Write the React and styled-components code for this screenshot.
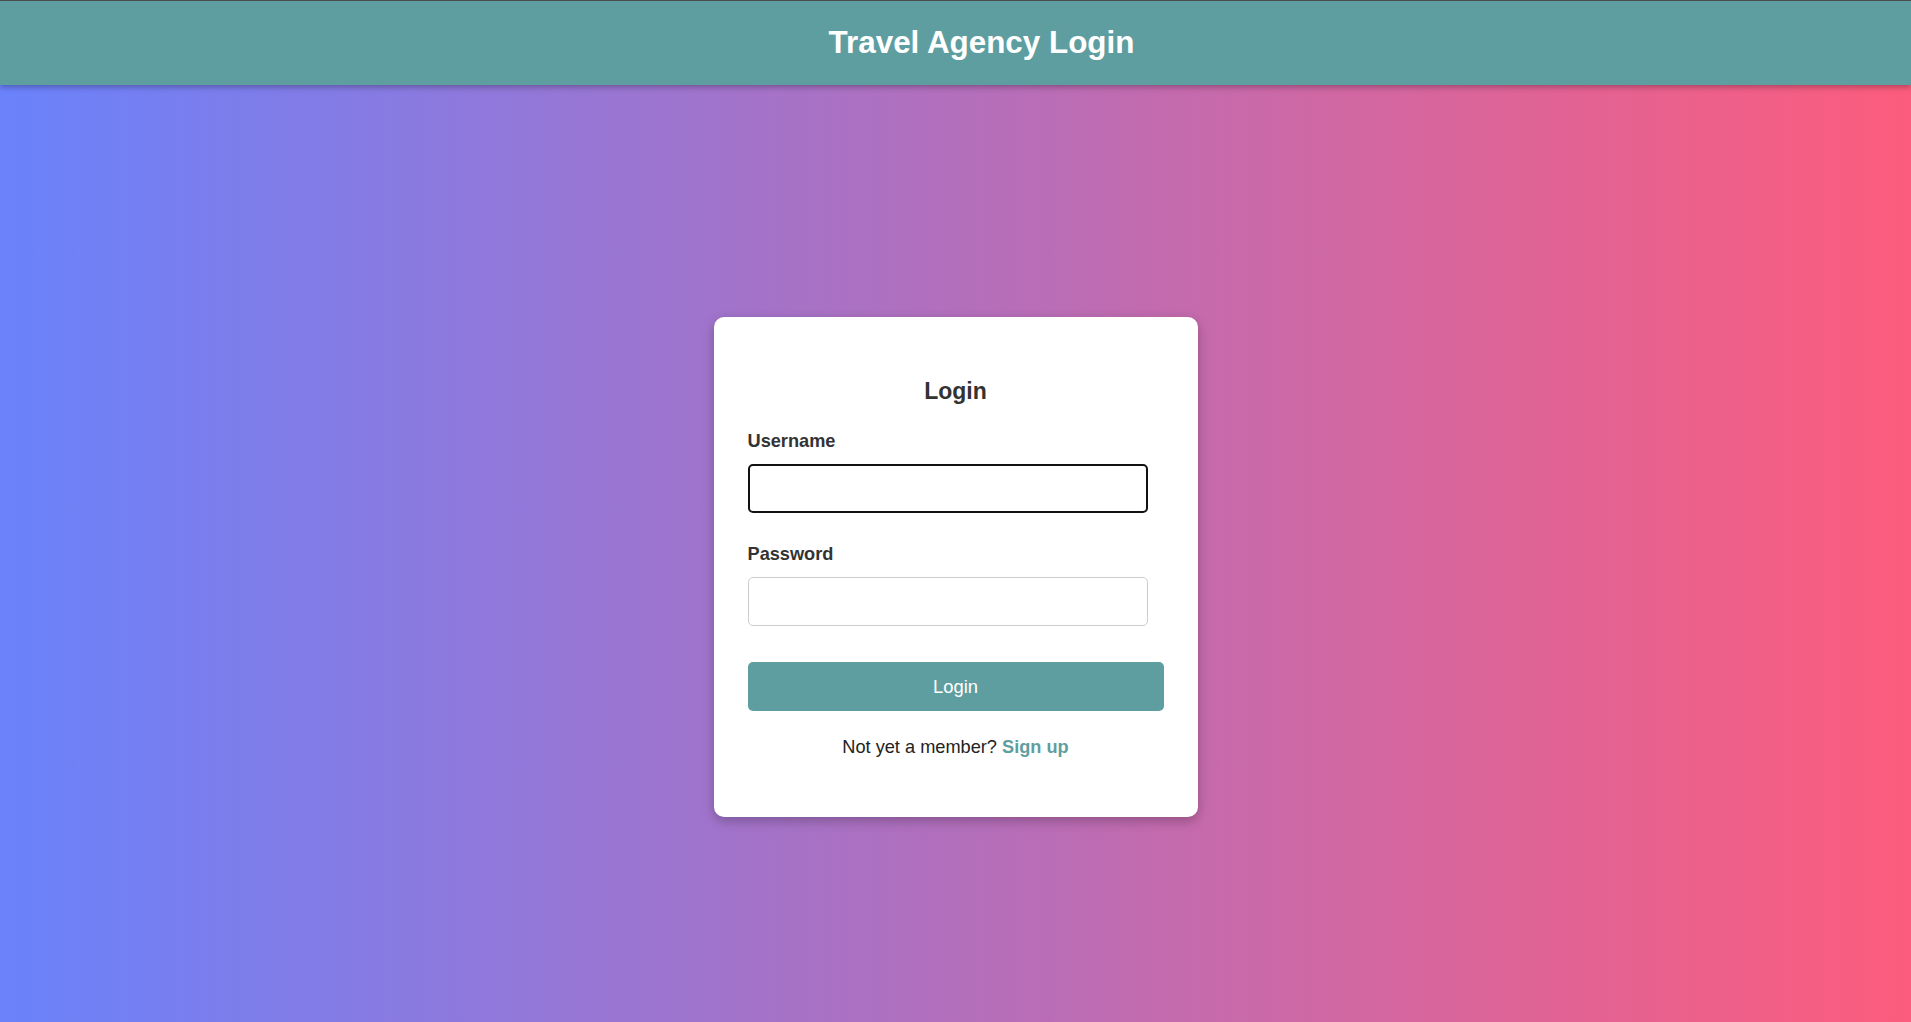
import React from "react";
import styled, { createGlobalStyle } from "styled-components";

const GlobalStyle = createGlobalStyle`
  html, body {
    margin: 0;
    padding: 0;
  }
  body {
    font-family: "Liberation Sans", Arial, sans-serif;
    background: linear-gradient(to right, #6a82fb, #fc5c7d);
    min-height: 100vh;
    border-top: 1px solid #4d4d4d;
  }
`;

const Header = styled.header`
  height: 84px;
  background: #5f9ea0;
  display: flex;
  align-items: center;
  justify-content: center;
  padding-left: 52px;
  box-shadow: 0 2px 6px rgba(0, 0, 0, 0.3);
  position: relative;
  z-index: 1;

  h1 {
    margin: 0;
    color: #fff;
    font-size: 31.4px;
    font-weight: 700;
    line-height: 36px;
  }
`;

const Main = styled.main`
  display: flex;
  justify-content: center;
  padding-top: 232px;
  padding-bottom: 40px;
`;

const Card = styled.div`
  width: 484px;
  box-sizing: border-box;
  background: #fff;
  border-radius: 10px;
  padding: 34px;
  box-shadow: 0 4px 12px rgba(0, 0, 0, 0.25);
`;

const Title = styled.h2`
  margin: 27px 0 27px;
  text-align: center;
  font-size: 23px;
  line-height: 26px;
  color: #333;
`;

const Field = styled.div`
  display: flex;
  flex-direction: column;
  margin-bottom: ${(p) => p.$gap || 0}px;
`;

const Label = styled.label`
  font-size: 18.2px;
  line-height: 20px;
  font-weight: 700;
  color: #333;
  margin-bottom: 13px;
`;

const Input = styled.input`
  width: 400px;
  height: 49px;
  box-sizing: border-box;
  border: 1px solid #ccc;
  border-radius: 5px;
  padding: 0 12px;
  font-family: inherit;
  font-size: 18px;
  background: #fff;

  &:focus,
  &.active {
    outline: none;
    border: 2px solid #111;
    padding: 0 11px;
  }
`;

const Button = styled.button`
  width: 100%;
  height: 49px;
  border: none;
  border-radius: 5px;
  background: #5f9ea0;
  color: #fff;
  font-family: inherit;
  font-size: 18.4px;
  cursor: pointer;
`;

const Footer = styled.p`
  margin: 26px 0 26px;
  text-align: center;
  font-size: 18.2px;
  line-height: 20px;
  color: #222;

  a {
    color: #5f9ea0;
    font-weight: 700;
    text-decoration: none;
  }
`;

export default function App() {
  return (
    <>
      <GlobalStyle />
      <Header>
        <h1>Travel Agency Login</h1>
      </Header>
      <Main>
        <Card>
          <Title>Login</Title>
          <form onSubmit={(e) => e.preventDefault()}>
            <Field $gap={31}>
              <Label htmlFor="username">Username</Label>
              <Input id="username" type="text" className="active" autoFocus />
            </Field>
            <Field $gap={36}>
              <Label htmlFor="password">Password</Label>
              <Input id="password" type="password" />
            </Field>
            <Button type="submit">Login</Button>
          </form>
          <Footer>
            Not yet a member? <a href="#">Sign up</a>
          </Footer>
        </Card>
      </Main>
    </>
  );
}
